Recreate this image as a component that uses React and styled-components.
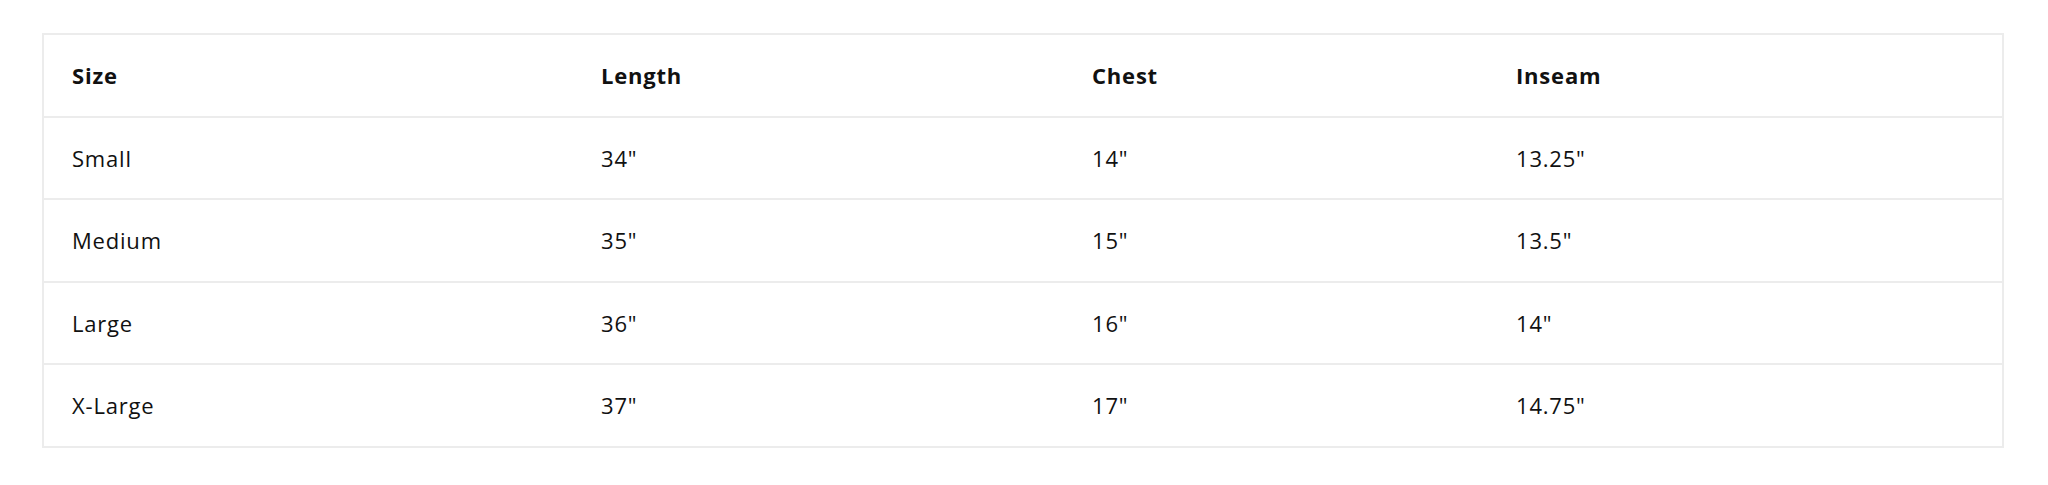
import React from 'react';
import styled, { createGlobalStyle } from 'styled-components';

const rows = [
  ['Small', '34"', '14"', '13.25"'],
  ['Medium', '35"', '15"', '13.5"'],
  ['Large', '36"', '16"', '14"'],
  ['X-Large', '37"', '17"', '14.75"'],
];

const columns = [
  { label: 'Size', width: 530 },
  { label: 'Length', width: 491 },
  { label: 'Chest', width: 424 },
  { label: 'Inseam', width: 515 },
];

const App = () => (
  <>
    <GlobalStyle />
    <Page>
      <Table>
        <colgroup>
          {columns.map((c) => (
            <col key={c.label} style={{ width: c.width }} />
          ))}
        </colgroup>
        <thead>
          <tr>
            {columns.map((c) => (
              <Th key={c.label}>{c.label}</Th>
            ))}
          </tr>
        </thead>
        <tbody>
          {rows.map((r) => (
            <tr key={r[0]}>
              {r.map((v, i) => (
                <Td key={i}>{v}</Td>
              ))}
            </tr>
          ))}
        </tbody>
      </Table>
    </Page>
  </>
);

const GlobalStyle = createGlobalStyle`
  body {
    margin: 0;
    background: #fff;
    font-family: "Open Sans", "Noto Sans", sans-serif;
    color: #111;
  }
`;

const Page = styled.div`
  padding: 33px 46px 0 42px;
`;

const Table = styled.table`
  width: 1960px;
  border-collapse: collapse;
  table-layout: fixed;
  border: 2px solid #ececec;
`;

const Cell = `
  height: 80.5px;
  padding: 0 28px;
  text-align: left;
  vertical-align: middle;
  border-bottom: 2px solid #ececec;
  font-size: 22px;
  letter-spacing: 0.8px;
`;

const Th = styled.th`
  ${Cell}
  font-weight: 700;
`;

const Td = styled.td`
  ${Cell}
  font-weight: 400;
`;

export default App;
